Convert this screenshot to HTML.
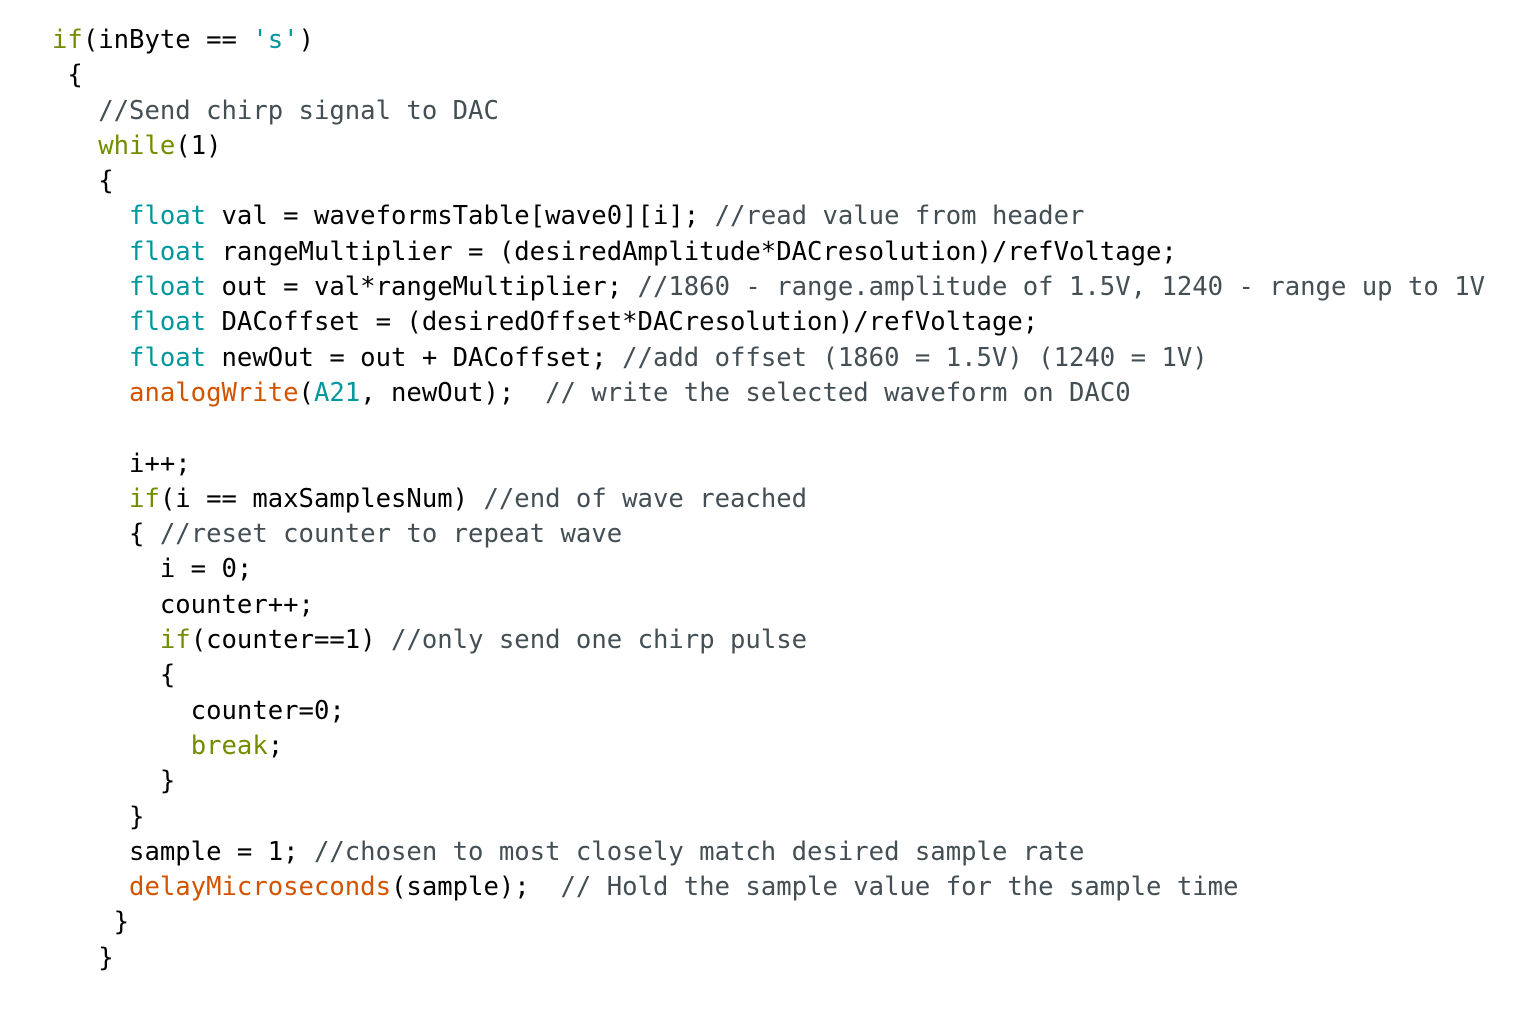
<!DOCTYPE html>
<html><head><meta charset="utf-8"><style>
html,body{margin:0;padding:0;background:#fff;width:1530px;height:1030px;overflow:hidden}
pre{margin:0;position:absolute;left:52px;top:23px;font-family:"DejaVu Sans Mono","Liberation Mono",monospace;font-size:25.6px;line-height:35.3px;color:#000;white-space:pre}
.k{color:#00979d}.f{color:#d35400}.c{color:#434f54}.b{color:#728e00}
</style></head><body><pre><span class="b">if</span>(inByte == <span class="k">'s'</span>)
 {
   <span class="c">//Send chirp signal to DAC</span>
   <span class="b">while</span>(1)
   {
     <span class="k">float</span> val = waveformsTable[wave0][i]; <span class="c">//read value from header</span>
     <span class="k">float</span> rangeMultiplier = (desiredAmplitude*DACresolution)/refVoltage;
     <span class="k">float</span> out = val*rangeMultiplier; <span class="c">//1860 - range.amplitude of 1.5V, 1240 - range up to 1V</span>
     <span class="k">float</span> DACoffset = (desiredOffset*DACresolution)/refVoltage;
     <span class="k">float</span> newOut = out + DACoffset; <span class="c">//add offset (1860 = 1.5V) (1240 = 1V)</span>
     <span class="f">analogWrite</span>(<span class="k">A21</span>, newOut);  <span class="c">// write the selected waveform on DAC0</span>

     i++;
     <span class="b">if</span>(i == maxSamplesNum) <span class="c">//end of wave reached</span>
     { <span class="c">//reset counter to repeat wave</span>
       i = 0;
       counter++;
       <span class="b">if</span>(counter==1) <span class="c">//only send one chirp pulse</span>
       {
         counter=0;
         <span class="b">break</span>;
       }
     }
     sample = 1; <span class="c">//chosen to most closely match desired sample rate</span>
     <span class="f">delayMicroseconds</span>(sample);  <span class="c">// Hold the sample value for the sample time</span>
    }
   }</pre></body></html>
